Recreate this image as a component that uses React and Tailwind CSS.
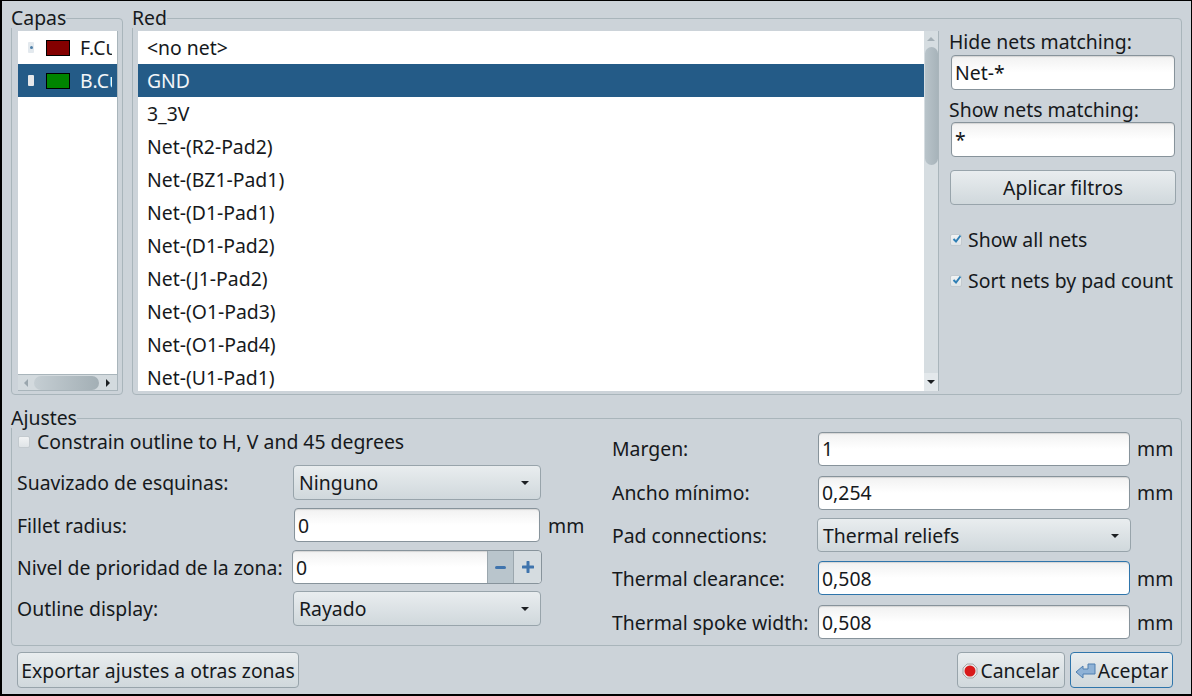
import { Fragment } from 'react';

const nets = [
  '<no net>', 'GND', '3_3V', 'Net-(R2-Pad2)', 'Net-(BZ1-Pad1)', 'Net-(D1-Pad1)',
  'Net-(D1-Pad2)', 'Net-(J1-Pad2)', 'Net-(O1-Pad3)', 'Net-(O1-Pad4)', 'Net-(U1-Pad1)',
];

const inputClass = 'flex items-center rounded-[4px] border border-[#87939b] bg-gradient-to-b from-[#f1f1f1] via-white to-white pl-[3px] shadow-[inset_0_1px_1px_rgba(0,0,0,0.12)]';
const buttonClass = 'flex items-center rounded-[4px] border border-[#98a4ab] bg-gradient-to-b from-[#e9edef] to-[#d0d8dc]';

function Arrow({ dir = 'down', color = '#1c1f22' }) {
  const points = {
    down: '0,0 8,0 4,4',
    up: '0,4 8,4 4,0',
    left: '4,0 4,8 0,4',
    right: '0,0 0,8 4,4',
  };
  const vertical = dir === 'up' || dir === 'down';
  return (
    <svg width={vertical ? 8 : 4} height={vertical ? 4 : 8} viewBox={vertical ? '0 0 8 4' : '0 0 4 8'}>
      <polygon points={points[dir]} fill={color} />
    </svg>
  );
}

function Group({ title, className, children }) {
  return (
    <fieldset className={`min-w-0 rounded-[4px] border border-[#a9b5bb] ${className}`}>
      <legend className="-ml-px h-[20px] leading-[20px]">{title}</legend>
      {children}
    </fieldset>
  );
}

function Check({ checked }) {
  return (
    <span className="relative block h-[12px] w-[12px] shrink-0 rounded-[2px] border border-[#c3cacf] bg-gradient-to-b from-[#f1f3f4] to-[#dfe4e7]">
      {checked && (
        <svg className="absolute left-[1px] top-[-1px]" width="10" height="10" viewBox="0 0 10 10">
          <path d="M1.5 5 L4 7.5 L8.5 1.5" fill="none" stroke="#2f7fb5" strokeWidth="2" />
        </svg>
      )}
    </span>
  );
}

function Select({ value, className }) {
  return (
    <div className={`${buttonClass} justify-between pl-[5px] pr-[11px] ${className}`}>
      <span>{value}</span>
      <Arrow />
    </div>
  );
}

function LayerRow({ name, color, selected }) {
  return (
    <div className={`flex h-[33px] items-center ${selected ? 'bg-[#245b87] text-[#f2f5f7]' : ''}`}>
      <span className={`ml-[10px] flex h-[11px] w-[6px] items-center justify-center rounded-[1px] ${selected ? 'bg-[#e6e8ea]' : 'bg-[#e3e9ee]'}`}>
        {!selected && <span className="h-[3px] w-[3px] rounded-full bg-[#4f7fa8]" />}
      </span>
      <span className="ml-[12px] h-[16px] w-[24px] border border-black" style={{ backgroundColor: color }} />
      <span className="ml-[10px] w-[32px] overflow-hidden whitespace-nowrap">{name}</span>
    </div>
  );
}

function LayerList() {
  return (
    <div className="ml-[6px] mt-[3px] flex h-[360px] w-[100px] flex-col border-r border-b border-[#a9b5bb] bg-white">
      <div className="flex-1">
        <LayerRow name="F.Cu" color="#840000" />
        <LayerRow name="B.Cu" color="#008400" selected />
      </div>
      <div className="flex h-[16px] items-center border-t border-[#a9b5bb] bg-[#d3dade]">
        <span className="ml-[6px] w-[10px]"><Arrow dir="left" color="#9aa6ad" /></span>
        <span className="h-[14px] w-[65px] rounded-full bg-gradient-to-r from-[#c5ced3] to-[#a3afb5]" />
        <span className="ml-[7px]"><Arrow dir="right" /></span>
      </div>
    </div>
  );
}

function NetList() {
  return (
    <div className="flex h-[360px] w-[801px]">
      <div className="w-[786px] overflow-hidden bg-white">
        {nets.map((net, i) => (
          <div
            key={net}
            className={`flex h-[33px] items-center pl-[9px] ${i === 1 ? 'bg-[#245b87] text-[#f2f5f7]' : ''}`}
          >
            {net}
          </div>
        ))}
      </div>
      <div className="flex w-[15px] flex-col items-center border-r border-[#a9b5bb] bg-[#d6dde1]">
        <span className="flex h-[16px] items-center"><Arrow dir="up" color="#a4afb6" /></span>
        <span className="h-[118px] w-[13px] rounded-full bg-gradient-to-r from-[#b9c4ca] to-[#a7b3ba]" />
        <span className="mt-auto flex h-[18px] w-full items-center justify-center bg-[#e3e8eb]"><Arrow /></span>
      </div>
    </div>
  );
}

function FilterPanel() {
  return (
    <div className="ml-[11px] flex w-[227px] flex-col">
      <div className="-ml-px -mt-[1px] h-[25px] leading-[24px] whitespace-nowrap">Hide nets matching:</div>
      <div className={`${inputClass} ml-[1px] h-[35px] w-[224px]`}>Net-*</div>
      <div className="-ml-px mt-[7px] h-[25px] leading-[25px] whitespace-nowrap">Show nets matching:</div>
      <div className={`${inputClass} ml-[1px] h-[35px] w-[224px]`}>*</div>
      <div className={`${buttonClass} mt-[13px] h-[35px] w-[226px] justify-center pt-px`}>Aplicar filtros</div>
      <label className="mt-[23px] flex h-[24px] items-center gap-[6px]"><Check checked />Show all nets</label>
      <label className="mt-[17px] flex h-[24px] items-center gap-[6px] whitespace-nowrap"><Check checked />Sort nets by pad count</label>
    </div>
  );
}

function LeftSettings() {
  return (
    <div className="flex w-[575px] flex-col pl-[5px]">
      <label className="flex h-[24px] items-center gap-[7px] pl-[1px] whitespace-nowrap"><Check />Constrain outline to H, V and 45 degrees</label>
      <div className="mt-[11px] flex h-[35px] items-center">
        <span className="w-[276px] whitespace-nowrap">Suavizado de esquinas:</span>
        <Select value="Ninguno" className="h-[35px] w-[248px]" />
      </div>
      <div className="mt-[8px] flex h-[34px] items-center">
        <span className="w-[277px] whitespace-nowrap pt-px">Fillet radius:</span>
        <div className={`${inputClass} h-[34px] w-[246px] pt-px`}>0</div>
        <span className="ml-[8px] pt-px">mm</span>
      </div>
      <div className="mt-[8px] flex h-[34px] items-center">
        <span className="w-[275px] whitespace-nowrap pt-px">Nivel de prioridad de la zona:</span>
        <div className={`${inputClass} h-[34px] w-[250px] pr-0`}>
          <span className="flex-1 pt-px">0</span>
          <span className="flex h-full w-[27px] items-center justify-center border-x border-[#9ba7ae] bg-[#b9c5cc]">
            <span className="h-[3px] w-[11px] rounded-full bg-[#3f74ad]" />
          </span>
          <span className="flex h-full w-[27px] items-center justify-center rounded-r-[4px] bg-[#d5dce0]">
            <svg width="12" height="12" viewBox="0 0 12 12">
              <path d="M6 1v10M1 6h10" stroke="#3f74ad" strokeWidth="3" strokeLinecap="round" />
            </svg>
          </span>
        </div>
      </div>
      <div className="mt-[7px] flex h-[35px] items-center">
        <span className="w-[276px] whitespace-nowrap">Outline display:</span>
        <Select value="Rayado" className="h-[35px] w-[248px]" />
      </div>
    </div>
  );
}

function RightSettings() {
  const rows = [
    ['Margen:', '1', 'mt-[2px]', ''],
    ['Ancho mínimo:', '0,254', 'mt-[10px]', ''],
    ['Pad connections:', null, 'mt-[8px]', 'pt-px'],
    ['Thermal clearance:', '0,508', 'mt-[9px]', 'pt-px', true],
    ['Thermal spoke width:', '0,508', 'mt-[10px]', 'pt-px'],
  ];
  return (
    <div className="ml-[25px] flex flex-col">
      {rows.map(([label, value, margin, nudge, focused]) => (
        <div key={label} className={`flex h-[34px] items-center ${margin}`}>
          <span className={`w-[206px] whitespace-nowrap ${nudge}`}>{label}</span>
          {value === null ? (
            <Select value="Thermal reliefs" className="-ml-px h-[34px] w-[314px] pt-px" />
          ) : (
            <Fragment>
              <div className={`${inputClass} h-[34px] w-[312px] ${nudge} ${focused ? '!border-[#2f75ab]' : ''}`}>{value}</div>
              <span className={`ml-[7px] ${nudge}`}>mm</span>
            </Fragment>
          )}
        </div>
      ))}
    </div>
  );
}

export default function App() {
  return (
    <div
      className="flex h-[696px] w-[1192px] flex-col overflow-hidden border border-b-2 border-black border-l-2 bg-[#ccd3d9] text-[19.4px] text-[#16191c]"
      style={{ fontFamily: '"Noto Sans", sans-serif' }}
    >
      <div className="ml-[9px] mt-[7px] flex">
        <Group title="Capas" className="h-[387px] w-[112px]">
          <LayerList />
        </Group>
        <Group title="Red" className="ml-[9px] flex h-[387px] w-[1050px]">
          <div className="ml-[5px] mt-[3px] flex">
            <NetList />
            <FilterPanel />
          </div>
        </Group>
      </div>
      <Group title="Ajustes" className="ml-[9px] mt-[13px] h-[238px] w-[1171px]">
        <div className="flex pt-[2px]">
          <LeftSettings />
          <RightSettings />
        </div>
      </Group>
      <div className="ml-[15px] mr-[18px] mt-[6px] flex h-[36px] items-stretch">
        <div className={`${buttonClass} w-[282px] justify-center whitespace-nowrap pt-px`}>Exportar ajustes a otras zonas</div>
        <div className={`${buttonClass} ml-auto w-[108px] justify-center gap-[2px] pt-px`}>
          <svg width="16" height="16" viewBox="0 0 16 16">
            <polygon points="5,1 11,1 15,5 15,11 11,15 5,15 1,11 1,5" fill="#e8e8e8" stroke="#a8a8a8" />
            <circle cx="8" cy="8" r="5.5" fill="#d91a1a" />
          </svg>
          Cancelar
        </div>
        <div className={`${buttonClass} ml-[5px] w-[103px] justify-center gap-[1px] pt-px !border-[#2f75ab]`}>
          <svg width="22" height="20" viewBox="0 0 22 20">
            <path d="M1 11 L8 5 L8 8 L13 8 L13 3 L20 3 L20 13 L8 13 L8 17 Z" fill="#8fb2d6" stroke="#4f7fb0" strokeWidth="1" />
          </svg>
          Aceptar
        </div>
      </div>
    </div>
  );
}
